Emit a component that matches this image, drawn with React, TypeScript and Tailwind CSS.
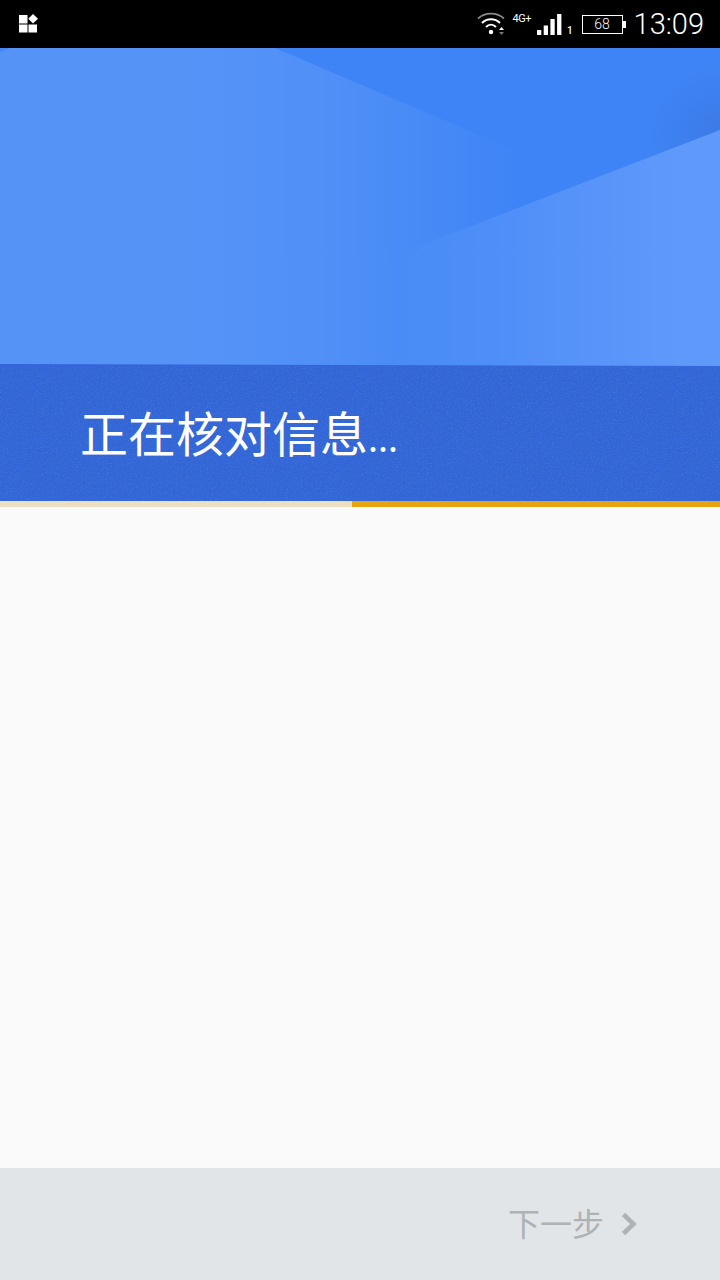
import React from "react";

const cjk = { fontFamily: '"Noto Sans CJK SC", "Noto Sans", sans-serif' };

function StatusBar() {
  return (
    <div className="flex h-12 items-center justify-between bg-black pl-[19px] pr-4 text-white" style={{ fontFamily: 'Roboto, sans-serif' }}>
      <svg width="20" height="20" viewBox="0 0 20 20" className="block">
        <rect x="0" y="1" width="8.5" height="8.5" fill="#fff" />
        <rect x="0" y="10.5" width="8.5" height="8" fill="#fff" />
        <rect x="9.5" y="10.5" width="8.5" height="8" fill="#fff" />
        <path d="M14 0 L19 4.7 L14 9.5 L9.3 4.7 Z" fill="#fff" />
      </svg>
      <div className="flex items-center">
        <svg width="30" height="26" viewBox="0 0 30 26" className="block">
          <path d="M1 7.5 C8 1 20 1 27 7.5" fill="none" stroke="#8a8a8a" strokeWidth="1.8" />
          <path d="M5 12 C10 7 18 7 23 12" fill="none" stroke="#fff" strokeWidth="2" />
          <path d="M9 16 C12 13 16 13 19 16" fill="none" stroke="#fff" strokeWidth="2" />
          <circle cx="14" cy="21" r="2.2" fill="#fff" />
          <path d="M24.5 16 L27 19 L22 19 Z" fill="#fff" />
          <path d="M24.5 24 L27 21 L22 21 Z" fill="#777" />
        </svg>
        <span className="mb-3 ml-[5px] text-[11px] leading-none tracking-[-0.5px]">4G+</span>
        <svg width="26" height="21" viewBox="0 0 26 21" className="ml-[6px] block">
          <rect x="0" y="16" width="4.3" height="5" fill="#fff" />
          <rect x="6.7" y="11.5" width="4.3" height="9.5" fill="#fff" />
          <rect x="13.4" y="5" width="4.3" height="16" fill="#fff" />
          <rect x="20.1" y="0" width="4.3" height="21" fill="#fff" />
        </svg>
        <span className="ml-[4px] mt-[14px] text-[10px] font-medium leading-none">1</span>
        <div className="ml-[9px] flex items-center">
          <div className="flex h-[19px] w-[41px] items-center justify-center border-[1.5px] border-white text-[14px] font-light leading-none">68</div>
          <div className="h-[7px] w-[3px] bg-white" />
        </div>
        <span className="ml-[8px] text-[29px] font-light leading-none">13:09</span>
      </div>
    </div>
  );
}

function HeroArt() {
  return (
    <svg width="720" height="318" viewBox="0 0 720 318" className="block w-full">
      <defs>
        <linearGradient id="left" gradientUnits="userSpaceOnUse" x1="200" y1="0" x2="520" y2="0">
          <stop offset="0" stopColor="#5593f7" />
          <stop offset="0.4" stopColor="#5593f7" stopOpacity="0.75" />
          <stop offset="1" stopColor="#5593f7" stopOpacity="0" />
        </linearGradient>
        <linearGradient id="wedge" gradientUnits="userSpaceOnUse" x1="390" y1="0" x2="680" y2="0">
          <stop offset="0" stopColor="#5f99fa" stopOpacity="0" />
          <stop offset="0.5" stopColor="#5f99fa" stopOpacity="0.62" />
          <stop offset="1" stopColor="#5f99fa" />
        </linearGradient>
        <radialGradient id="shade" gradientUnits="userSpaceOnUse" cx="720" cy="88" r="75">
          <stop offset="0" stopColor="#3874dc" stopOpacity="0.6" />
          <stop offset="1" stopColor="#3874dc" stopOpacity="0" />
        </radialGradient>
      </defs>
      <rect width="720" height="318" fill="#3f84f6" />
      <rect x="620" y="0" width="100" height="170" fill="url(#shade)" />
      <polygon points="0,0 275,0 720,190 720,318 0,318" fill="url(#left)" />
      <polygon points="422,197 720,82 720,318 300,318 300,244" fill="url(#wedge)" />
      <polygon points="0,0 10,0 0,4" fill="#4486f6" />
      <polygon points="0,316 720,318 0,318" fill="#3266d6" />
    </svg>
  );
}

export default function App() {
  return (
    <div className="flex h-[1280px] w-[720px] flex-col bg-[#fafafa]">
      <StatusBar />
      <HeroArt />
      <div className="relative flex h-[135px] items-center bg-[#3266d6] pb-[5px] pl-[80px]" style={cjk}>
        <svg width="720" height="135" className="absolute inset-0 block">
          <filter id="grain">
            <feTurbulence type="fractalNoise" baseFrequency="0.8" numOctaves="2" />
            <feColorMatrix values="0 0 0 0 1  0 0 0 0 1  0 0 0 0 1  0 0 0 1.6 -0.75" />
          </filter>
          <rect width="720" height="135" filter="url(#grain)" opacity="0.15" />
        </svg>
        <span className="relative text-[48px] leading-none text-white">
          正在核对信息<span className="text-[36px]">...</span>
        </span>
      </div>
      <div className="flex h-[6px]">
        <div className="w-[352px] bg-[#ecdfc4]" />
        <div className="flex-1 bg-[#e6a50f]" />
      </div>
      <div className="flex-1" />
      <div className="flex h-[112px] items-center justify-end bg-[#e1e5e8] pr-[82px]" style={cjk}>
        <span className="mb-1 text-[32px] leading-none text-[#adb2b5]">下一步</span>
        <svg width="18" height="24" viewBox="0 0 18 24" className="ml-[16px] block">
          <path d="M3.5 2.5 L13.5 12 L3.5 21.5" fill="none" stroke="#adb2b5" strokeWidth="4.5" />
        </svg>
      </div>
    </div>
  );
}
